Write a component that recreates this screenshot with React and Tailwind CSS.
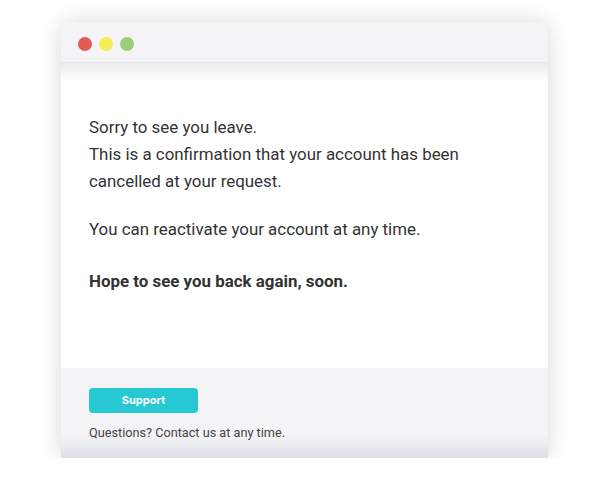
import React from "react";

const App = () => {
  return (
    <div className="w-[615px] h-[490px] bg-white" style={{ fontFamily: "Roboto, 'Liberation Sans', sans-serif" }}>
      {/* clip the window at the bottom like the screenshot */}
      <div className="h-[458px] overflow-hidden pt-[22px]">
        <div className="ml-[61px] w-[487px] rounded-t-[10px] bg-white shadow-[0_0_22px_rgba(0,0,0,0.16)]">
          {/* title bar */}
          <div className="h-[41px] rounded-t-[10px] bg-[#f4f4f6] border-b border-[#e6e6ea] flex items-center gap-[7px] pl-[17px] pt-[3px]">
            <span className="w-[14px] h-[14px] rounded-full bg-[#e25b57]" />
            <span className="w-[14px] h-[14px] rounded-full bg-[#f5ec5a]" />
            <span className="w-[14px] h-[14px] rounded-full bg-[#9ccb79]" />
          </div>

          {/* body */}
          <div className="h-[305px] bg-gradient-to-b from-[#ececee] via-white via-[6%] to-white px-[28px] pt-[51px] text-[16.9px] leading-[27px] text-[#333333]">
            <p>Sorry to see you leave.</p>
            <p>This is a confirmation that your account has been</p>
            <p>cancelled at your request.</p>
            <p className="mt-[21px]">You can reactivate your account at any time.</p>
            <p className="mt-[25px] font-bold">Hope to see you back again, soon.</p>
          </div>

          {/* footer */}
          <div className="h-[90px] bg-gradient-to-b from-[#f4f4f6] via-[#f4f4f6] via-[75%] to-[#dcdfe7] px-[28px] pt-[19px]">
            <button
              className="w-[109px] h-[25px] rounded-[4px] bg-[#26c9d3] text-white text-[11px] font-bold"
              style={{ fontFamily: "Inter, 'Liberation Sans', sans-serif" }}
            >
              Support
            </button>
            <p className="mt-[12px] text-[12.7px] leading-[16px] text-[#444444]">
              Questions? Contact us at any time.
            </p>
          </div>
        </div>
      </div>
    </div>
  );
};

export default App;
